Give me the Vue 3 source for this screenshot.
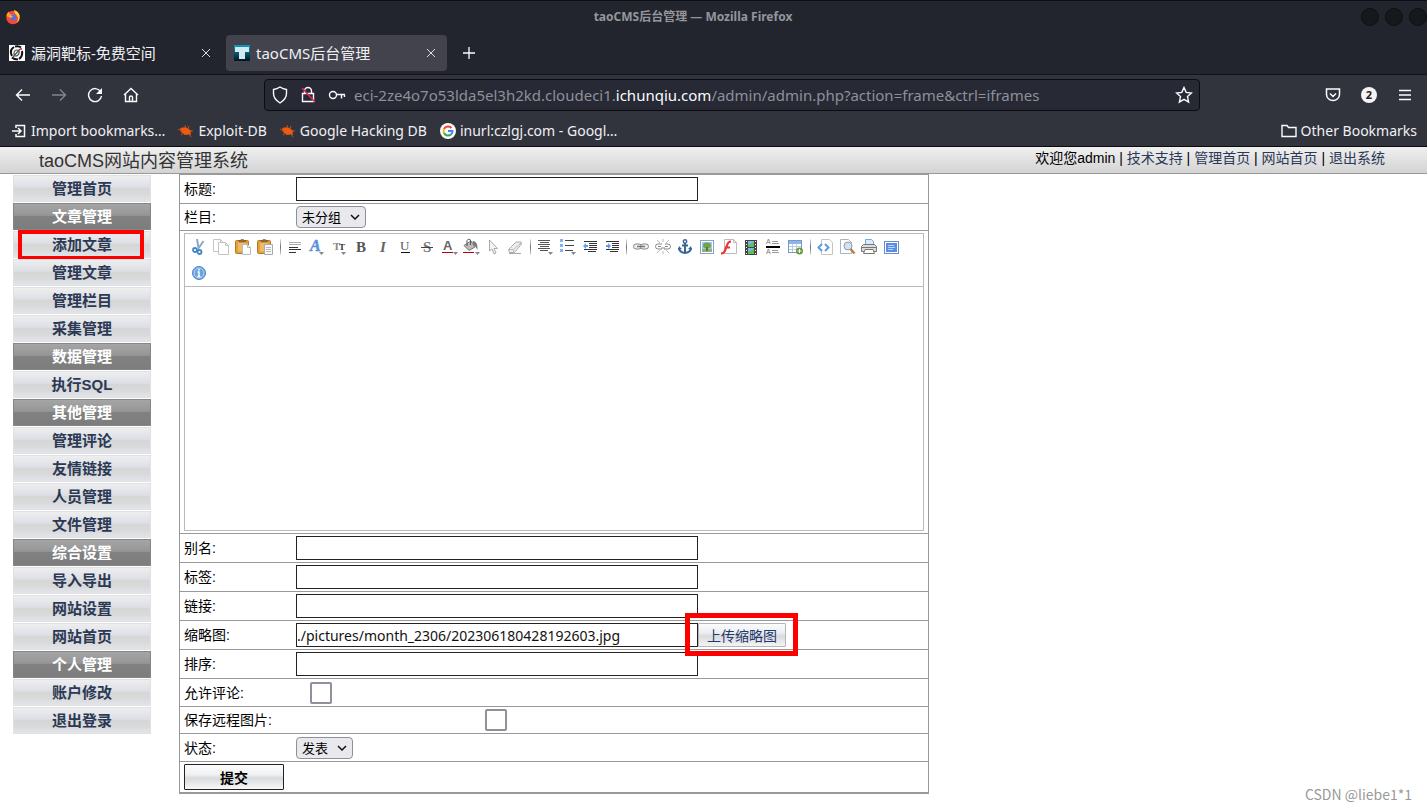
<script setup>
import { ref } from 'vue'

const menu = [
  { text: '管理首页' },
  { text: '文章管理', head: true },
  { text: '添加文章', marked: true },
  { text: '管理文章' },
  { text: '管理栏目' },
  { text: '采集管理' },
  { text: '数据管理', head: true },
  { text: '执行SQL' },
  { text: '其他管理', head: true },
  { text: '管理评论' },
  { text: '友情链接' },
  { text: '人员管理' },
  { text: '文件管理' },
  { text: '综合设置', head: true },
  { text: '导入导出' },
  { text: '网站设置' },
  { text: '网站首页' },
  { text: '个人管理', head: true },
  { text: '账户修改' },
  { text: '退出登录' },
]

const topLinks = ['技术支持', '管理首页', '网站首页', '退出系统']

const title = ref('')
const fields = ref([
  { id: 'alias', label: '别名:', value: '' },
  { id: 'tags', label: '标签:', value: '' },
  { id: 'link', label: '链接:', value: '' },
  { id: 'thumb', label: '缩略图:', value: './pictures/month_2306/202306180428192603.jpg', upload: true },
  { id: 'order', label: '排序:', value: '' },
])

const arrow = '<path d="M10 13h5l-2.500 3z" fill="#888"/>'
const page = '<path d="M.5.5h7l3 3v9H.5z" fill="#fff" stroke="#c4c4c4"/><path d="M7.500.5v3h3" fill="none" stroke="#c4c4c4"/>'
const board = '<rect x=".5" y="1.500" width="13" height="13" rx="1" fill="#e0a040" stroke="#b87820"/><rect x="3" y="3.500" width="8" height="9" fill="#eebb66"/><path d="M4 3V1.500h1.500L6 .5h2.500l.5 1h1.500V3z" fill="#9a6a30" stroke="#7a5525" stroke-width=".5"/>'
const lines = (list, color = '#333') => list.map(([x, y, w]) => `<rect x="${x}" y="${y}" width="${w}" height="1" fill="${color}"/>`).join('')

const icons = {
  cut: '<path d="M6 0l1.500 9M12.500 2L7 10" stroke="#8ea9c8" stroke-width="2"/><circle cx="4" cy="11" r="2" fill="none" stroke="#4685c5" stroke-width="1.800"/><circle cx="8.500" cy="13" r="2" fill="none" stroke="#4685c5" stroke-width="1.800"/>',
  copy: `${page}<g transform="translate(5 3)">${page}</g>`,
  paste: `${board}<path d="M7.500 5.500h5l3 3v7h-8z" fill="#fff" stroke="#bbb"/><path d="M12.500 5.500v3h3" fill="none" stroke="#bbb"/>`,
  pasteText: `${board}<path d="M7.500 5.500h8v10h-8z" fill="#f7f7f7" stroke="#aaa"/>${lines([[9, 8, 5], [9, 10, 5], [9, 12, 5]], '#bbb')}`,
  quick: lines([[2, 3, 12], [2, 5, 12]], '#aaa') + lines([[2, 8, 9], [2, 10, 12], [2, 13, 7]], '#333'),
  font: `<text x="1" y="12" font-family="Liberation Serif" font-size="16" font-weight="700" font-style="italic" fill="#5a91dc" stroke="#5a91dc" stroke-width=".5">A</text>${arrow}`,
  size: `<text x="2" y="11" font-family="Liberation Serif" font-size="11" font-weight="700" fill="#888">T</text><text x="8" y="11" font-family="Liberation Serif" font-size="9" font-weight="700" fill="#333">T</text>${arrow}`,
  bold: '<text x="3" y="13" font-family="Liberation Serif" font-size="15" font-weight="700" fill="#555">B</text>',
  italic: '<text x="5" y="13" font-family="Liberation Serif" font-size="15" font-weight="700" font-style="italic" fill="#666">I</text>',
  underline: '<text x="3" y="11" font-family="Liberation Serif" font-size="13" fill="#555">U</text><path d="M4 13.500h9" stroke="#111"/>',
  strike: '<text x="4" y="13" font-family="Liberation Serif" font-size="15" font-weight="700" fill="#777">S</text><path d="M2 8.500h12" stroke="#444"/>',
  color: `<text x="2" y="11" font-family="Liberation Sans" font-size="13" font-weight="700" fill="#666">A</text><path d="M1 13.500h11" stroke="#b00"/><path d="M12 13h5l-2.500 3z" fill="#888"/>`,
  fill: '<path d="M1 6.500L8 2l4 6-6 3.500z" fill="#bbb" stroke="#777"/><path d="M4 7V1.500Q5-1 7.500 1v5" fill="none" stroke="#555"/><path d="M9.500 2q5.500 0 5 9-2-4-4-5z" fill="#777"/><path d="M0 13.500h11" stroke="#b00"/><path d="M12 13h5l-2.500 3z" fill="#888"/>',
  clear: '<path d="M4.500 1v11l2.500-2 2 5 2-1-2-4.500h3.500z" fill="#f4f4f4" stroke="#aaa"/>',
  eraser: '<path d="M1.500 10.500L9 3h5l.5 2-7 8.500H2.500z" fill="#eee" stroke="#aaa"/><path d="M1.500 10.500h5l8-7M6.500 10.500v3" fill="none" stroke="#bbb"/><path d="M2 14.500h12" stroke="#aaa"/>',
  align: `${lines([[1, 1, 12], [3, 3, 9], [1, 5, 12], [3, 7, 9], [1, 9, 12], [3, 11, 8]], '#555')}<path d="M11 13h5l-2.500 3z" fill="#888"/>`,
  list: `<g fill="#82b0f0"><rect x="1" y="0" width="3" height="3"/><rect x="1" y="5" width="3" height="3"/><rect x="1" y="10" width="3" height="3"/></g>${lines([[6, 1, 9], [6, 6, 9], [6, 11, 8]], '#444')}<path d="M12 13h5l-2.500 3z" fill="#888"/>`,
  outdent: `${lines([[3, 2, 13], [8, 4, 8], [8, 6, 8], [8, 8, 8], [3, 10, 13], [7, 12, 8]])}<path d="M2 7l3-3v2h2v2H5v2z" fill="#5f9df0"/>`,
  indent: `${lines([[3, 2, 13], [9, 4, 7], [9, 6, 7], [9, 8, 7], [3, 10, 13], [7, 12, 8]])}<path d="M8 7L5 4v2H3v2h2v2z" fill="#5f9df0"/>`,
  link: '<rect x=".5" y="5" width="8" height="5" rx="2.500" fill="#eee" stroke="#888"/><rect x="7.500" y="5" width="8" height="5" rx="2.500" fill="#eee" stroke="#888"/><path d="M4 7.500h8" stroke="#777" stroke-width="1.500"/>',
  unlink: '<path d="M7 5H3Q.5 5 .5 7.500T3 10h4V8M10 5h3q2.500 0 2.500 2.500T13 10H9V8M3 7.500h3M10 7.500h3" fill="none" stroke="#888"/><path d="M8 3V0M5 4L2 1M11 4l3-3M8 12v3M5 11l-3 3M11 11l3 3" stroke="#bbb"/>',
  anchor: '<circle cx="8" cy="2.500" r="1.700" fill="none" stroke="#376797" stroke-width="1.500"/><path d="M8 4v10M5 6.500h6M2 9q0 4 6 5 6-1 6-5" fill="none" stroke="#376797" stroke-width="2"/><path d="M1 11l1-4 3 3zM15 11l-1-4-3 3z" fill="#376797"/>',
  image: '<rect x="1.500" y="1.500" width="13" height="13" fill="#fff" stroke="#8aa2ca"/><rect x="3" y="3" width="10" height="10" fill="#9cc9ed"/><path d="M3 10h10v3H3z" fill="#8fb56c"/><ellipse cx="8" cy="6.500" rx="4" ry="3" fill="#6ca842"/><path d="M7 8h2v4H7z" fill="#7b6940"/>',
  flash: '<path d="M3.500.5h9l3 3v11h-12z" fill="#fff" stroke="#bbb"/><path d="M12.500.5v3h3" fill="none" stroke="#bbb"/><path d="M10 2.500q-3 0-4 4l-2 5q-1 3-4 3M4 8.500h5" fill="none" stroke="#e33" stroke-width="2.200"/>',
  media: '<rect x="2" y="1" width="12" height="15" fill="#444"/><rect x="5" y="2" width="6" height="6" fill="#79b7f1"/><rect x="5" y="9" width="6" height="6" fill="#79b7f1"/><path d="M5 6l6-3v5H5zM5 13l6-3v5H5z" fill="#5fbf51"/><path d="M3.500 2v14M12.500 2v14" stroke="#fff" stroke-dasharray="1 2"/>',
  hr: `${lines([[7, 2, 6], [7, 4, 7], [7, 11, 6], [7, 13, 7]], '#999')}<text x="1" y="5" font-family="Liberation Sans" font-size="7" fill="#777">A</text><text x="1" y="15" font-family="Liberation Sans" font-size="7" fill="#777">A</text><path d="M1 8h14" stroke="#000" stroke-width="2"/>`,
  table: '<rect x="1.500" y="1.500" width="13" height="12" fill="#fff" stroke="#7799c6"/><path d="M2 3.500h12" stroke="#8db5ea" stroke-width="3"/><path d="M2 7.500h12M2 10.500h12M5.500 5v8M9.500 5v8" stroke="#bbcbe0"/><circle cx="12.500" cy="12" r="3.500" fill="#69983d"/><path d="M10.500 12h4M12.500 10v4" stroke="#fff"/>',
  source: '<path d="M4.500 6V.5h8l3 3v12h-11V11" fill="#fff" stroke="#c4c4c4"/><path d="M5 5L1.500 8.500 5 12M8 5l3.500 3.500L8 12" fill="none" stroke="#5a9ce0" stroke-width="2"/>',
  preview: '<path d="M1.500.5h8l3 3v11h-11z" fill="#fff" stroke="#a6b4c6"/><circle cx="9" cy="7" r="4" fill="#cbe4fa" stroke="#9a9a9a"/><path d="M11.500 10l4 4.500" stroke="#b98235" stroke-width="2.500"/>',
  print: '<path d="M4.500 7V.5h6l2 2V7z" fill="#d9ebfd" stroke="#79a9dc"/><path d="M.5 7.500l2-2h11l2 2v5H.5z" fill="#ddd" stroke="#777"/><path d="M1 8.500h14" stroke="#777"/><path d="M4 10.500h8l1.500 4h-11z" fill="#fff" stroke="#777"/>',
  full: '<rect x="1.500" y="2.500" width="14" height="12" fill="#fff" stroke="#6f8bc0"/><rect x="3" y="4" width="11" height="9" fill="#5b8de8"/><path d="M5 6.500h6M5 8.500h7M5 10.500h5" stroke="#bcd3ff"/>',
  about: '<circle cx="8" cy="8" r="6.500" fill="#6ba4e0" stroke="#4b84c4"/><circle cx="8" cy="8" r="5" fill="none" stroke="#b5d4f5"/><path d="M8 4v1.500M6.500 7H8v4M6.500 11.500h3" stroke="#fff" stroke-width="1.500" fill="none"/>',
}

const tools = [
  'cut', 'copy', 'paste', 'pasteText', '|',
  'quick', 'font', 'size', 'bold', 'italic', 'underline', 'strike', 'color', 'fill', 'clear', 'eraser', '|',
  'align', 'list', 'outdent', 'indent', '|',
  'link', 'unlink', 'anchor', 'image', 'flash', 'media', 'hr', 'table', '|',
  'source', 'preview', 'print', 'full', 'about',
]
</script>

<template>
  <div class="window">
    <header class="chrome">
      <div class="titlebar">
        <svg class="fox" width="16" height="16" viewBox="0 0 16 16">
          <circle cx="8" cy="8.500" r="6.800" fill="#f5483c" />
          <path d="M9 1q4 1 5.500 5 .8 5-3 8 3-5 0-8Q9 4 9 1z" fill="#ffd23c" />
          <path d="M1.500 6Q2 3.500 4 2.500 4 4 5 5l3 1-3 2-3-.5z" fill="#ff9a2e" />
          <circle cx="8.300" cy="8.500" r="3" fill="#5b6ee0" />
          <path d="M3 7q3-1 5 0-1 2-3 2z" fill="#ffb02e" />
        </svg>
        <span class="wintitle">taoCMS后台管理 — Mozilla Firefox</span>
        <span class="winbtns"><i></i><i></i><i></i></span>
      </div>

      <div class="tabs">
        <div class="tab">
          <svg width="16" height="16" viewBox="0 0 16 16">
            <rect width="16" height="16" fill="#fff" />
            <path d="M3 11Q0 5 5 2M6 1.500q4-1 6 1M13 6q1 5-3 8M9 14.500q-4 0-6-2" fill="none" stroke="#111" stroke-width="2" />
            <path d="M4 12l7-8M5 9q0-4 3-4t2 3-3 3-2-2z" fill="none" stroke="#555" stroke-width="1.200" />
            <circle cx="12" cy="4" r="1" fill="#e22" />
          </svg>
          <span class="tabtext">漏洞靶标-免费空间</span>
          <button class="plain" aria-label="关闭标签"><svg width="10" height="10" viewBox="0 0 10 10"><path d="M1 1l8 8M9 1L1 9" stroke="#ddd" /></svg></button>
        </div>
        <div class="tab active">
          <svg width="16" height="16" viewBox="0 0 16 16">
            <defs><linearGradient id="tg" x2="0" y2="1"><stop stop-color="#0d9bc4" /><stop offset="1" stop-color="#02131b" /></linearGradient></defs>
            <rect width="16" height="16" fill="url(#tg)" />
            <path d="M1 2h14v5h-4v7H5V7H1z" fill="#cfeaf2" />
          </svg>
          <span class="tabtext">taoCMS后台管理</span>
          <button class="plain" aria-label="关闭标签"><svg width="10" height="10" viewBox="0 0 10 10"><path d="M1 1l8 8M9 1L1 9" stroke="#ddd" /></svg></button>
        </div>
        <button class="plain plus" aria-label="新建标签"><svg width="12" height="12" viewBox="0 0 12 12"><path d="M6 0v12M0 6h12" stroke="#fbfbfe" stroke-width="1.300" /></svg></button>
      </div>

      <div class="navbar">
        <div class="navbtns">
          <button class="plain" aria-label="后退"><svg width="16" height="16" viewBox="0 0 16 16"><path d="M15 8H2M7 2.500L1.500 8 7 13.500" /></svg></button>
          <button class="plain dim" aria-label="前进"><svg width="16" height="16" viewBox="0 0 16 16"><path d="M1 8h13M9 2.500L14.500 8 9 13.500" /></svg></button>
          <button class="plain" aria-label="刷新"><svg width="16" height="16" viewBox="0 0 16 16"><path d="M13.500 4.500A6.500 6.500 0 1 0 14.500 9" /><path d="M15 1v6H9z" fill="#fbfbfe" stroke="none" /></svg></button>
          <button class="plain" aria-label="主页"><svg width="16" height="16" viewBox="0 0 16 16"><path d="M1 8l7-6.500L15 8M2.500 7v7.500h11V7M6.500 14v-4q0-1 1.500-1t1.500 1v4" /></svg></button>
        </div>
        <div class="url">
          <svg width="16" height="18" viewBox="0 0 16 18"><path d="M8 1q3 2 6.500 2.500v4Q14.500 13 8 17 1.500 13 1.500 7.500v-4Q5 3 8 1z" /></svg>
          <svg width="16" height="18" viewBox="0 0 16 18"><path d="M4.500 7.500V5a3.500 3.500 0 0 1 7 0v2.500M2.500 7.500h11v8h-11z" /><path d="M2 2l13 14" stroke="#e22850" stroke-width="1.600" /></svg>
          <svg width="18" height="16" viewBox="0 0 18 16"><circle cx="5" cy="8" r="3.500" /><path d="M8.500 7.500H17M13.500 8v3.500M16.500 8v2" /></svg>
          <span class="address">eci-2ze4o7o53lda5el3h2kd.cloudeci1.<b>ichunqiu.com</b>/admin/admin.php?action=frame&amp;ctrl=iframes</span>
          <svg width="18" height="18" viewBox="0 0 18 18"><path d="M9 1.500l2.200 4.900 5.300.6-4 3.600 1.100 5.400L9 13.300 4.400 16l1.100-5.400-4-3.600 5.300-.6z" /></svg>
        </div>
        <div class="navright">
          <svg width="16" height="16" viewBox="0 0 16 16"><path d="M1.500 2h13v5.500a6.500 6 0 0 1-13 0zM5 6.500l3 3 3-3" stroke-width="1.500" /></svg>
          <span class="count">2</span>
          <button class="plain" aria-label="菜单"><svg width="16" height="16" viewBox="0 0 16 16"><path d="M2 3.500h12M2 8h12M2 12.500h12" /></svg></button>
        </div>
      </div>

      <nav class="bookmarks">
        <a href="#"><svg width="16" height="16" viewBox="0 0 16 16"><path d="M5 5V2.500h8.500v11H5V11M1 8h8M7 5l3 3-3 3" stroke-width="1.500" /></svg>Import bookmarks…</a>
        <a v-for="name in ['Exploit-DB', 'Google Hacking DB']" :key="name" href="#"><svg width="16" height="16" viewBox="0 0 16 16"><path class="bug" d="M2 6q1-2 3-1.500 4-1 7 2.500l2 1-1.500 1 .5 3-3-.5-3 .5-3-2-1.500-2z" /><path d="M0 6l4 2M7 2l1 3M11 3l-1 3M15 8h-3M3 12l3-2M13 14l-2-3" stroke="#b94e18" stroke-width="1" /></svg>{{ name }}</a>
        <a href="#"><svg width="16" height="16" viewBox="0 0 16 16"><circle cx="8" cy="8" r="8" class="white" /><path d="M11.500 5A4.600 4.600 0 0 0 4 6" stroke="#ea4335" stroke-width="2" /><path d="M4 6a4.600 4.600 0 0 0 0 4" stroke="#fbbc05" stroke-width="2" /><path d="M4 10a4.600 4.600 0 0 0 7 1.500" stroke="#34a853" stroke-width="2" /><path d="M11 11.500Q12.500 10 12.500 8H8" stroke="#4285f4" stroke-width="2" /></svg>inurl:czlgj.com - Googl…</a>
        <a href="#" class="other"><svg width="16" height="16" viewBox="0 0 16 16"><path d="M1 2.500h5l1.500 2H15v9H1z" /></svg>Other Bookmarks</a>
      </nav>
    </header>

    <div class="pagehead">
      <h1>taoCMS网站内容管理系统</h1>
      <div class="user">欢迎您admin<template v-for="l in topLinks" :key="l"> | <a href="#">{{ l }}</a></template></div>
    </div>

    <main class="body">
      <nav class="side">
        <a v-for="m in menu" :key="m.text" href="#" :class="{ head: m.head, marked: m.marked }">{{ m.text }}</a>
      </nav>

      <form class="form" @submit.prevent>
        <div class="row field">
          <label for="title">标题:</label>
          <input id="title" v-model="title" type="text">
        </div>
        <div class="row short">
          <label for="cat">栏目:</label>
          <span class="select"><select id="cat"><option>未分组</option></select><svg width="10" height="6" viewBox="0 0 10 6"><path d="M1 1l4 4 4-4" /></svg></span>
        </div>
        <div class="row editrow">
          <div class="editor">
            <div class="tools">
              <template v-for="(t, i) in tools" :key="i">
                <span v-if="t === '|'" class="sep"></span>
                <button v-else type="button" class="tool" :aria-label="t"><svg width="16" height="16" viewBox="0 0 16 16" v-html="icons[t]"></svg></button>
              </template>
            </div>
            <textarea aria-label="内容"></textarea>
          </div>
        </div>
        <div v-for="f in fields" :key="f.id" class="row field">
          <label :for="f.id">{{ f.label }}</label>
          <input :id="f.id" v-model="f.value" type="text">
          <span v-if="f.upload" class="upwrap"><button type="button" class="upload">上传缩略图</button></span>
        </div>
        <div class="row check">
          <label for="allow">允许评论:</label>
          <input id="allow" type="checkbox" class="near">
        </div>
        <div class="row short">
          <label for="remote">保存远程图片:</label>
          <span class="wide"><input id="remote" type="checkbox"></span>
        </div>
        <div class="row check">
          <label for="state">状态:</label>
          <span class="select"><select id="state"><option>发表</option></select><svg width="10" height="6" viewBox="0 0 10 6"><path d="M1 1l4 4 4-4" /></svg></span>
        </div>
        <div class="row last">
          <button type="submit" class="submit">提交</button>
        </div>
      </form>
    </main>
    <div class="watermark">CSDN @liebe1*1</div>
  </div>
</template>

<style>
body {
  background: #fff;
}
</style>

<style scoped>
* {
  box-sizing: border-box;
}
.window {
  position: relative;
  min-height: 100vh;
  font: 14px/20px "Liberation Sans", "Noto Sans CJK SC", sans-serif;
  color: #000;
}
.window a {
  text-decoration: none;
}
svg {
  display: block;
  flex: none;
}
.chrome {
  font: 15px/20px "Noto Sans", "Noto Sans CJK SC", sans-serif;
  color: #f0f0f4;
  background: #23252e;
  border-top: 1px solid #0d0e11;
  border-bottom: 1px solid #0c0c0d;
}
.plain {
  display: flex;
  padding: 0;
  border: 0;
  background: none;
}
.titlebar {
  display: grid;
  grid-template-columns: 1fr auto 1fr;
  align-items: center;
  height: 32px;
  padding: 0 46px 0 5px;
  overflow: hidden;
}
.wintitle {
  font-size: 12px;
  font-weight: 700;
  color: #94969c;
}
.winbtns {
  display: flex;
  justify-content: flex-end;
  gap: 6px;
  margin-right: -46px;
}
.winbtns i {
  flex: none;
  width: 18px;
  height: 18px;
  border-radius: 50%;
  background: #17181b;
  border: 1px solid #0e0f12;
}
.tabs {
  display: flex;
  height: 42px;
  align-items: flex-start;
  padding-top: 2px;
  border-bottom: 1px solid #111319;
}
.tab {
  display: flex;
  align-items: center;
  width: 221px;
  height: 36px;
  padding: 0 11px 0 8px;
  gap: 6px;
  border-radius: 4px;
}
.tab:first-child {
  width: 226px;
  padding: 0 15px 0 9px;
}
.tab.active {
  background: #42434c;
}
.tabtext {
  flex: 1;
}
.plus {
  margin: 12px 0 0 16px;
}
.navbar {
  display: flex;
  align-items: center;
  height: 40px;
  background: #32343d;
  padding: 0 14px 0 15px;
}
.navbar svg,
.bookmarks svg {
  fill: none;
  stroke: #fbfbfe;
  stroke-width: 1.400;
}
.navbtns {
  display: flex;
  gap: 20px;
  width: 249px;
}
.dim {
  opacity: .4;
}
.url {
  display: flex;
  flex: 1;
  align-items: center;
  gap: 12px;
  height: 32px;
  padding: 0 6px 0 7px;
  border: 1px solid #0c0c10;
  border-radius: 4px;
  background: #272935;
  min-width: 0;
}
.address {
  flex: 1;
  color: #8f9098;
  margin-left: -4px;
  white-space: nowrap;
  overflow: hidden;
}
.address b {
  color: #fbfbfe;
  font-weight: 400;
}
.navright {
  display: flex;
  align-items: center;
  justify-content: flex-end;
  gap: 20px;
  width: 213px;
}
.count {
  width: 16px;
  height: 16px;
  border-radius: 50%;
  background: #f4f4f6;
  color: #222;
  font-size: 11px;
  line-height: 16px;
  font-weight: 700;
  text-align: center;
}
.bookmarks {
  display: flex;
  align-items: center;
  gap: 13px;
  height: 31px;
  padding: 0 10px 0 11px;
  background: #32343d;
}
.bookmarks a {
  display: flex;
  align-items: center;
  gap: 4px;
  color: #f0f0f4;
  font-size: 14px;
  white-space: nowrap;
}
.bookmarks .other {
  margin-left: auto;
}
.bookmarks .bug {
  fill: #ee5a12;
  stroke: none;
}
.bookmarks .white {
  fill: #fff;
  stroke: none;
}
.pagehead {
  display: flex;
  justify-content: space-between;
  height: 27px;
  padding: 0 42px 0 39px;
  background: linear-gradient(#f0f0f0, #d3d3d4);
  border-bottom: 1px solid #999;
}
.pagehead h1 {
  margin: 0;
  font-size: 18px;
  line-height: 28px;
  font-weight: 400;
  color: #333;
}
.user {
  line-height: 22px;
}
.user a {
  color: #2b3954;
}
.body {
  display: flex;
  align-items: flex-start;
  gap: 28px;
  padding-left: 13px;
}
.side {
  display: flex;
  flex-direction: column;
  gap: 1px;
  width: 138px;
  padding-top: 1px;
}
.side a {
  position: relative;
  height: 27px;
  border: 1px solid #dfe1e5;
  background: linear-gradient(#eeeeef 0, #dcdfe5 45%, #d6d6d6 50%, #d9dadc 75%, #e2e5e9 100%);
  color: #2b3954;
  font-size: 15px;
  line-height: 25px;
  font-weight: 700;
  text-align: center;
}
.side a.head {
  color: #fff;
  border-color: #868686;
  background: linear-gradient(#a5a5a5 0, #969696 45%, #818181 50%, #7d7d7d 100%);
}
.side a.marked::after {
  content: "";
  position: absolute;
  inset: -2px 6px -3px 4px;
  border: 4px solid #f00;
}
.form {
  width: 750px;
  border: 1px solid #999;
  border-bottom-width: 2px;
}
.row {
  display: flex;
  align-items: center;
  height: 29px;
  padding: 0 4px;
  border-bottom: 1px solid #999;
}
.row label {
  width: 112px;
}
.row.short {
  height: 27px;
}
.row.check {
  height: 28px;
}
.row.editrow {
  height: auto;
  padding: 2px 4px;
}
.row.last {
  height: 30px;
  border-bottom: 0;
}
.field input {
  width: 402px;
  height: 24px;
  padding: 0;
  border: 1px solid #222;
  background: #fff;
  font: 14px "Noto Sans", sans-serif;
  color: #111;
}
.select {
  display: flex;
  align-items: center;
  position: relative;
}
.select select {
  appearance: none;
  height: 22px;
  padding: 0 23px 0 5px;
  border: 1px solid #8f8f9d;
  border-radius: 4px;
  background: #e9e9ed;
  color: #000;
  font: 13px "Noto Sans", "Noto Sans CJK SC", sans-serif;
}
.select svg {
  position: absolute;
  right: 6px;
  fill: none;
  stroke: #111;
  stroke-width: 1.500;
}
input[type="checkbox"] {
  appearance: none;
  width: 22px;
  height: 22px;
  margin: 0;
  border: 2px solid #8f8f9d;
  border-radius: 2px;
  background: #fff;
}
input[type="checkbox"].near {
  margin-left: 14px;
}
.wide {
  display: flex;
  justify-content: center;
  width: 400px;
}
.editor {
  flex: 1;
  border: 1px solid #bbb;
}
.tools {
  display: flex;
  flex-wrap: wrap;
  padding: 0 3px;
  border-bottom: 1px solid #bbb;
}
.tool {
  display: flex;
  align-items: center;
  justify-content: center;
  width: 22px;
  height: 26px;
  padding: 0;
  border: 0;
  background: none;
}
.tool svg {
  overflow: visible;
}
.sep {
  width: 1px;
  height: 16px;
  margin: 5px 3px 5px 4px;
  background: linear-gradient(#e4e8ec, #66707c 50%, #d4dae0);
}
.editor textarea {
  display: block;
  width: 100%;
  height: 243px;
  border: 0;
  resize: none;
}
.upwrap {
  position: relative;
}
.upwrap::after {
  content: "";
  position: absolute;
  inset: -10px -12px -9px -13px;
  border: 5px solid #f00;
  pointer-events: none;
}
.upload {
  display: block;
  width: 88px;
  height: 24px;
  padding: 0;
  border: 1px solid #b5b5b5;
  border-radius: 1px;
  background: linear-gradient(#fbfbfb 0, #eceef1 40%, #d9dadd 55%, #f4f4f5 100%);
  color: #1f3a6b;
  font: 14px "Liberation Sans", "Noto Sans CJK SC", sans-serif;
}
.submit {
  width: 100px;
  height: 26px;
  padding: 0;
  border: 1px solid #222;
  border-radius: 1px;
  background: linear-gradient(#fdfdfd 0, #f0f1f3 40%, #d9dadd 55%, #f8f8f8 100%);
  color: #000;
  font: 700 14px "Liberation Sans", "Noto Sans CJK SC", sans-serif;
}
.watermark {
  position: absolute;
  right: 15px;
  bottom: 5px;
  font-family: "Noto Sans CJK SC", sans-serif;
  color: #999;
}
</style>
